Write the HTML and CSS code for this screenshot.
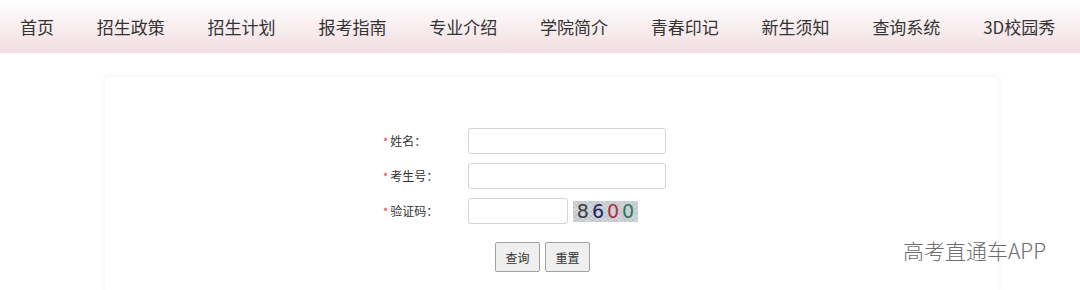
FILE: index.html
```html
<!DOCTYPE html>
<html lang="zh-CN">
<head>
<meta charset="utf-8">
<link rel="stylesheet" href="styles.css">
</head>
<body>
<nav class="nav">
  <a>首页</a><a>招生政策</a><a>招生计划</a><a>报考指南</a><a>专业介绍</a><a>学院简介</a><a>青春印记</a><a>新生须知</a><a>查询系统</a><a>3D校园秀</a>
</nav>
<main class="card">
  <form class="form">
    <label class="lbl"><span class="star">*</span>姓名：</label>
    <div class="field"><input class="inp"></div>
    <label class="lbl"><span class="star">*</span>考生号：</label>
    <div class="field"><input class="inp"></div>
    <label class="lbl"><span class="star">*</span>验证码：</label>
    <div class="field"><input class="inp short"><span class="captcha"><i class="d1">8</i><i class="d2">6</i><i class="d3">0</i><i class="d4">0</i></span></div>
    <div class="btns"><button type="button" class="btn">查询</button><button type="button" class="btn">重置</button></div>
  </form>
</main>
<div class="watermark">高考直通车APP</div>
</body>
</html>
```
FILE: styles.css
```css
html, body { margin: 0; padding: 0; background: #fff; }
body { font-family: "Noto Sans CJK SC", "Microsoft YaHei", sans-serif; color: #333; width: 1080px; height: 290px; overflow: hidden; position: relative; }
.nav { height: 53px; display: flex; align-items: center; gap: 42.8px; padding-left: 20px; background: linear-gradient(to bottom, #ffffff 0%, #f9eff1 45%, #f1dde2 100%); }
.nav a { font-size: 17px; color: #333; white-space: nowrap; line-height: 1; }
.card { margin: 24px 0 0 105px; width: 893px; height: 213px; background: #fff; box-shadow: 0 0 6px rgba(0,0,0,0.07); border-radius: 3px 3px 0 0; padding-top: 51px; box-sizing: border-box; }
.form { margin-left: 278px; display: grid; grid-template-columns: 85px auto; row-gap: 9px; align-items: center; }
.lbl { font-size: 12px; color: #333; line-height: 26px; }
.star { color: #e0393e; font-size: 11px; margin-right: 2px; }
.field { display: flex; align-items: center; gap: 5px; height: 26px; }
.inp { width: 198px; height: 26px; box-sizing: border-box; border: 1px solid #d4d4d4; border-radius: 3px; padding: 0 6px; margin: 0; background: #fff; }
.inp.short { width: 100px; }
.captcha { width: 65px; height: 21px; background: #c9cdd2; background-image: repeating-linear-gradient(45deg, rgba(255,255,255,0.25) 0 1px, transparent 1px 3px), repeating-linear-gradient(-30deg, rgba(0,0,0,0.06) 0 1px, transparent 1px 4px); display: flex; justify-content: center; align-items: center; gap: 3px; font-family: "DejaVu Sans", sans-serif; font-size: 19px; font-weight: normal; line-height: 1; }
.captcha i { font-style: normal; }
.d1 { color: #3d3d44; }
.d2 { color: #26265e; }
.d3 { color: #a8324a; }
.d4 { color: #2a7a62; }
.btns { grid-column: 1 / 3; display: flex; gap: 5px; margin: 9px 0 0 112px; }
.btn { width: 45px; height: 30px; font-family: "Noto Sans CJK SC", sans-serif; font-size: 12px; color: #333; background: #efefef; border: 1px solid #a0a0a0; border-radius: 2px; padding: 0; }
.watermark { position: absolute; left: 903px; top: 235px; font-size: 21px; color: #6e6e6e; font-family: "Noto Sans CJK SC", sans-serif; font-weight: 300; text-shadow: 0 0 2px #fff; }
```
